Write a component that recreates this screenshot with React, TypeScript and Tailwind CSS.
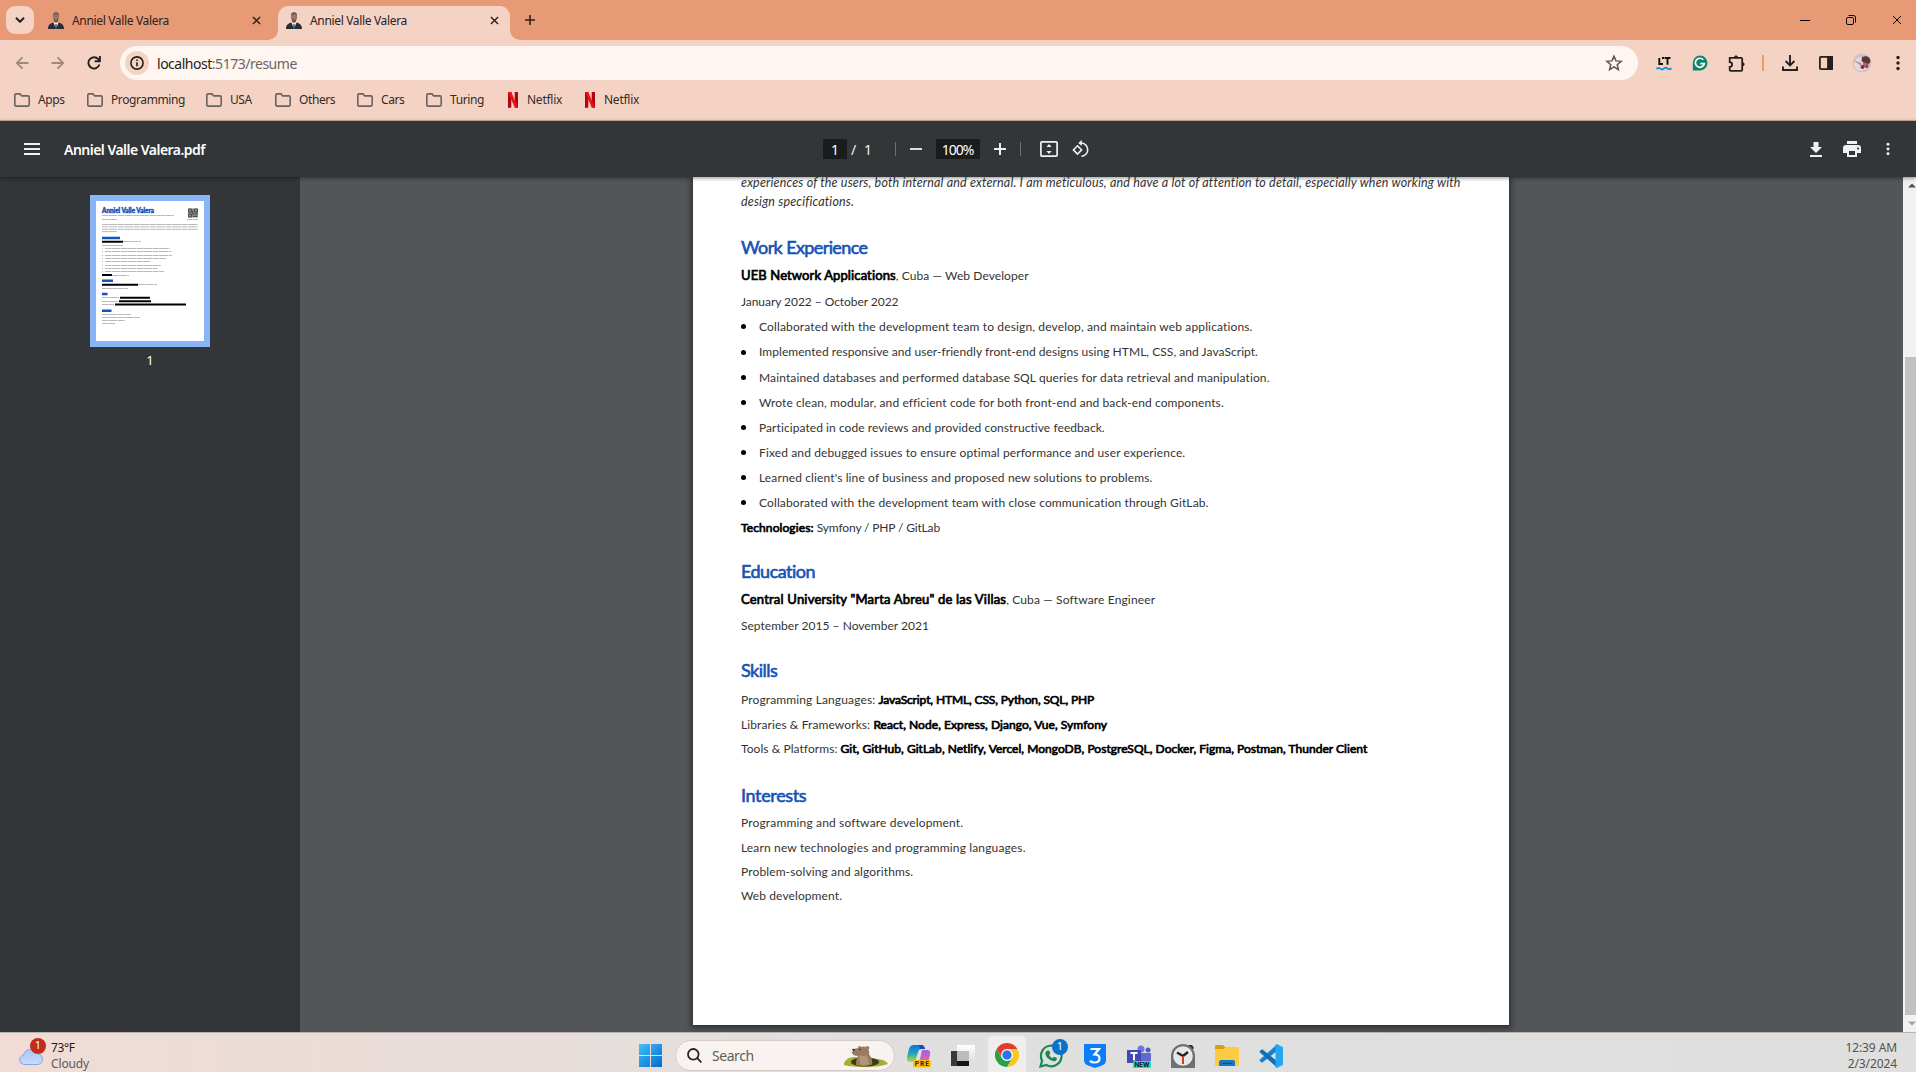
import React from "react";

type P = { className?: string; children?: React.ReactNode };

const Favicon = () => (
  <svg viewBox="0 0 16 17" className="h-[17px] w-4 shrink-0">
    <path d="M0 17C0 13 2 11.500 5 10.500L8 12l3-1.500c3 1 5 2.500 5 6.500z" fill="#2a2d36" />
    <path d="M5.500 10.500L8 17l2.500-6.500L8 9z" fill="#e8edf2" />
    <path d="M7.500 12h1l.5 5H7z" fill="#39465a" />
    <ellipse cx="8" cy="5" rx="3.100" ry="4.400" fill="#9c7560" />
    <path d="M5 4C5 1 6 .3 8 .3S11 1 11 4l-1-1.500H6z" fill="#6d5a4e" />
    <path d="M6 7.500h4v2.200L8 11 6 9.700z" fill="#7b5645" />
  </svg>
);

const Cross = ({ className }: P) => (
  <svg viewBox="0 0 10 10" className={className} stroke="currentColor" fill="none">
    <path d="M1 1l8 8M9 1L1 9" />
  </svg>
);

const Dots = ({ className }: P) => (
  <svg viewBox="0 0 4 16" className={className} fill="currentColor">
    <circle cx="2" cy="2.500" r="1.700" />
    <circle cx="2" cy="8" r="1.700" />
    <circle cx="2" cy="13.500" r="1.700" />
  </svg>
);

const Folder = () => (
  <svg viewBox="0 0 16 14" className="h-[14px] w-4 shrink-0" fill="none" stroke="#6a6261" strokeWidth="1.600">
    <path d="M.8 2.200Q.8.9 2.100.9H6l1.700 2h6.200q1.300 0 1.300 1.300v7.600q0 1.300-1.300 1.300H2.100Q.8 13.100.8 11.800z" />
  </svg>
);

const Netflix = () => (
  <svg viewBox="0 0 10 16" className="ml-[3px] h-4 w-[10px] shrink-0">
    <path d="M0 0h3.300v15.500L0 16zM6.700 0H10v16l-3.300-.5z" fill="#b1060f" />
    <path d="M0 0h3.300L10 16l-3.300-.5z" fill="#f0101c" />
  </svg>
);

const bookmarks = [
  { label: "Apps", w: "w-[73px]" },
  { label: "Programming", w: "w-[119px]" },
  { label: "USA", w: "w-[69px]" },
  { label: "Others", w: "w-[82px]" },
  { label: "Cars", w: "w-[69px]" },
  { label: "Turing", w: "w-[79px]" },
  { label: "Netflix", w: "w-[77px]" },
  { label: "Netflix", w: "w-[77px]" },
];

function TabStrip() {
  return (
    <div className="flex h-10 items-start bg-[#e79a75] text-[12px] text-[#2b211e]">
      <div className="ml-1.5 mt-1.5 flex h-7 w-7 items-center justify-center rounded-[9px] bg-[#f5d3c4]">
        <svg viewBox="0 0 10 6" className="h-[6px] w-[10px]" fill="none" stroke="#222" strokeWidth="2">
          <path d="M1 .8l4 4 4-4" />
        </svg>
      </div>
      <div className="flex h-10 w-[244px] items-center pl-[14px] pr-[17px]">
        <Favicon />
        <span className="ml-2 flex-1 pt-0.5 tracking-[-0.34px]">Anniel Valle Valera</span>
        <Cross className="h-[9px] w-[9px] stroke-[1.600]" />
      </div>
      <div className="relative mt-1.5 flex h-[34px] w-[232px] items-center rounded-t-[10px] bg-[#f5d3c4] pb-1.5 pl-2 pr-[11px]">
        <svg viewBox="0 0 10 10" className="absolute -left-[10px] bottom-0 h-[10px] w-[10px]" fill="#f5d3c4">
          <path d="M10 0v10H0A10 10 0 0 0 10 0z" />
        </svg>
        <svg viewBox="0 0 10 10" className="absolute -right-[10px] bottom-0 h-[10px] w-[10px]" fill="#f5d3c4">
          <path d="M0 0v10h10A10 10 0 0 1 0 0z" />
        </svg>
        <Favicon />
        <span className="ml-2 flex-1 pt-0.5 tracking-[-0.34px]">Anniel Valle Valera</span>
        <Cross className="h-[9px] w-[9px] stroke-[1.600]" />
      </div>
      <svg viewBox="0 0 10 10" className="ml-[15px] mt-[15px] h-[10px] w-[10px]" stroke="#2b211e" strokeWidth="1.600">
        <path d="M5 0v10M0 5h10" />
      </svg>
      <div className="ml-auto mr-[14px] flex h-10 items-center gap-9 text-black">
        <svg viewBox="0 0 10 10" className="h-[10px] w-[10px]" stroke="currentColor"><path d="M0 5.500h10" /></svg>
        <svg viewBox="0 0 10 10" className="h-[10px] w-[10px]" fill="none" stroke="currentColor">
          <rect x=".5" y="2.500" width="7" height="7" rx="1.300" />
          <path d="M2.500.5h5q2 0 2 2v5" />
        </svg>
        <Cross className="h-[10px] w-[10px]" />
      </div>
    </div>
  );
}

function AddressRow() {
  return (
    <div className="flex h-[46px] items-center text-[#25211f]">
      <svg viewBox="0 0 14 14" className="ml-[15px] h-[14px] w-[14px]" fill="none" stroke="#a18a80" strokeWidth="1.800">
        <path d="M13.500 7H2M7.500 1.300L1.800 7l5.700 5.700" />
      </svg>
      <svg viewBox="0 0 14 14" className="ml-[22px] h-[14px] w-[14px]" fill="none" stroke="#a18a80" strokeWidth="1.800">
        <path d="M.5 7H12M6.500 1.300L12.200 7l-5.700 5.700" />
      </svg>
      <svg viewBox="0 0 14 14" className="ml-[22px] h-[14px] w-[14px]" fill="none" stroke="currentColor" strokeWidth="1.900">
        <path d="M12.400 8.500A5.600 5.600 0 1 1 11.300 3.200L12.500 4.600" />
        <path d="M12.900 0v5.200H7.700" />
      </svg>
      <div className="ml-[19px] flex h-[34px] w-[1518px] items-center rounded-full bg-[#fff6f2] pl-[5px] pr-[15px]">
        <div className="flex h-6 w-6 items-center justify-center rounded-full bg-[#f5d3c4]">
          <svg viewBox="0 0 14 14" className="h-[14px] w-[14px]" fill="none" stroke="currentColor" strokeWidth="1.600">
            <circle cx="7" cy="7" r="6.100" />
            <path d="M7 6.200v4M7 3.500v1.500" />
          </svg>
        </div>
        <span className="ml-2 flex-1 text-[14px] tracking-[-0.48px] text-[#6b6563]">
          <span className="text-[#1f1c1b]">localhost</span>:5173/resume
        </span>
        <svg viewBox="0 0 24 24" className="h-[18px] w-[18px]" fill="none" stroke="#5c5654" strokeWidth="2">
          <path d="M12 3l2.700 6.200 6.800.6-5.200 4.400 1.600 6.600L12 17.300l-5.900 3.500 1.600-6.600L2.500 9.800l6.800-.6z" />
        </svg>
      </div>
      <svg viewBox="0 0 16 16" className="ml-[18px] h-4 w-4" fill="none">
        <path d="M3.300 3v6H7M6 3h2.500M9 3h5.500M11.500 3v6.800" stroke="#111" strokeWidth="1.900" />
        <path d="M.5 14q2-2 3.800-.4t3.700 0 3.700 0 3.800-.4" stroke="#1596d3" strokeWidth="1.900" />
      </svg>
      <svg viewBox="0 0 16 16" className="ml-5 h-4 w-4">
        <path d="M8 .6A7.400 7.400 0 1 1 8 15.500H.8V8A7.300 7.300 0 0 1 8 .6z" fill="#0b8468" />
        <path d="M11.300 4.800A4.500 4.500 0 1 0 12.300 8.700H8.300" fill="none" stroke="#fff" strokeWidth="1.700" />
      </svg>
      <svg viewBox="0 0 17 17" className="ml-5 h-[17px] w-[17px]" fill="none" stroke="currentColor" strokeWidth="1.800">
        <path d="M1.700 2.800h11.500q1 0 1 1v11q0 1-1 1H2.700q-1 0-1-1v-2.900a2.200 2.200 0 0 0 0-4.800z" />
        <path d="M6.200 2.500a1.800 1.800 0 0 1 3.600 0zM14.500 7.500a1.800 1.800 0 0 1 0 3.600z" fill="currentColor" strokeWidth=".6" />
      </svg>
      <div className="ml-[17px] h-4 w-0.5 bg-[#e79a75]" />
      <svg viewBox="0 0 16 16" className="ml-[18px] h-4 w-4" fill="none" stroke="currentColor" strokeWidth="1.900">
        <path d="M8 0v10M3.600 6L8 10.400 12.400 6M1 11.500V15h14v-3.500" />
      </svg>
      <svg viewBox="0 0 14 14" className="ml-[21px] h-[14px] w-[14px]" fill="none" stroke="currentColor" strokeWidth="1.800">
        <rect x=".9" y=".9" width="12.200" height="12.200" rx=".8" />
        <path d="M9 1h4v12H9z" fill="currentColor" />
      </svg>
      <svg viewBox="0 0 20 20" className="ml-[19px] h-5 w-5">
        <circle cx="10" cy="10" r="9.500" fill="#cfc2c8" />
        <circle cx="9" cy="11" r="7" fill="#e4dadd" />
        <path d="M10 4l4-1q4 1 4.500 5-1 4-5 3l-4-3z" fill="#64342f" />
        <path d="M1 7l8 3 1 3-2-1z" fill="#b28f8f" />
        <path d="M11 9l6 2-2 4-4-1z" fill="#a56a6a" />
        <circle cx="10.500" cy="14" r="2" fill="#8e2a31" />
        <circle cx="15" cy="13.500" r="1.200" fill="#8e2a31" />
      </svg>
      <Dots className="ml-6 h-4 w-1" />
    </div>
  );
}

function BookmarksBar() {
  return (
    <div className="flex h-[35px] items-center border-b border-[#cfb1a4] pb-[6px] pl-[14px] text-[12px] text-[#332b28]">
      {bookmarks.map((b, i) => (
        <div key={i} className={`flex items-center ${b.w}`}>
          {b.label === "Netflix" ? <Netflix /> : <Folder />}
          <span className={b.label === "Netflix" ? "ml-[9px] tracking-[-0.25px]" : "ml-2 tracking-[-0.4px]"}>{b.label}</span>
        </div>
      ))}
    </div>
  );
}

function PdfToolbar() {
  return (
    <div className="relative z-10 flex h-14 shrink-0 items-center bg-[#323639] text-[14px] text-[#f1f1f1] shadow-[0_1px_4px_rgba(0,0,0,0.45)]">
      <svg viewBox="0 0 16 12" className="ml-6 h-3 w-4" fill="currentColor">
        <path d="M0 0h16v2H0zM0 5h16v2H0zM0 10h16v2H0z" />
      </svg>
      <div className="ml-6 w-[759px] pt-px text-[14px] font-semibold tracking-[-0.52px] text-white">Anniel Valle Valera.pdf</div>
      <div className="flex h-5 w-6 items-center justify-center bg-[#191b1c] text-white">1</div>
      <div className="ml-1 w-[10px]">/</div>
      <div className="ml-[3px] w-[31px]">1</div>
      <div className="h-[14px] w-px bg-[#6f7274]" />
      <div className="ml-[14px] h-[2px] w-3 bg-[#dcdcdc]" />
      <div className="ml-[14px] flex h-5 w-11 items-center justify-center bg-[#191b1c] pr-px tracking-[-1px] text-white">100%</div>
      <svg viewBox="0 0 12 12" className="ml-[14px] h-3 w-3" stroke="#eee" strokeWidth="2"><path d="M6 0v12M0 6h12" /></svg>
      <div className="ml-[14px] h-[14px] w-px bg-[#6f7274]" />
      <svg viewBox="0 0 18 16" className="ml-[19px] h-4 w-[18px]" fill="none" stroke="currentColor" strokeWidth="1.700">
        <rect x=".9" y=".9" width="16.200" height="14.200" rx="1" />
        <path d="M9 3l2.600 3H6.400zM9 13l2.600-3H6.400z" fill="currentColor" stroke="none" />
      </svg>
      <svg viewBox="0 0 18 18" className="ml-[14px] h-[18px] w-[18px]" fill="none" stroke="currentColor" strokeWidth="1.600">
        <path d="M5.500 5.800L9.600 9.900 5.500 14 1.400 9.900z" />
        <path d="M8.500 3A6.700 6.700 0 1 1 9.500 16.400" />
        <path d="M9.800 0v6L6.300 3z" fill="currentColor" stroke="none" />
      </svg>
      <svg viewBox="0 0 12 15" className="ml-auto h-[15px] w-3" fill="currentColor">
        <path d="M3.500 0h5v5H12L6 11 0 5h3.500zM0 13h12v2H0z" />
      </svg>
      <svg viewBox="0 0 18 16" className="ml-[21px] h-4 w-[18px]" fill="currentColor">
        <path d="M4 0h10v3H4z" />
        <path fillRule="evenodd" d="M3 4h12a3 3 0 0 1 3 3v5h-4v4H4v-4H0V7a3 3 0 0 1 3-3zm3 6v4h6v-4zm9-3.500a1 1 0 1 0 .1 0z" />
      </svg>
      <Dots className="ml-[25px] mr-[26px] h-[14px] w-1" />
    </div>
  );
}

function Thumbnail() {
  return (
    <div className="h-[152px] w-[120px] border-[6px] border-[#8ab4f8] bg-white">
      <svg viewBox="0 0 108 140" className="h-[140px] w-[108px]">
        <text x="6" y="11.500" textLength="52" lengthAdjust="spacingAndGlyphs" fill="#1155bb" stroke="#1155bb" strokeWidth=".5" fontSize="7" fontWeight="700" fontFamily="Lato, sans-serif">Anniel Valle Valera</text>
        <path d="M92 7.500h10v9H92z" fill="#888" />
        <path d="M92.500 8h3v3h-3zM98.500 8h3v3h-3zM92.500 13h3v3h-3zM96.500 10v3h5M97 15.500h4" fill="none" stroke="#4a4a4a" strokeWidth=".9" />
        <g stroke="#9b9b9b" strokeWidth=".7" strokeDasharray="6 .4 9 .5">
          <path d="M6 14.500h72M6 18.500h15M91 18.500h11M6 23.500h96M6 25.800h96M6 28.300h96M6 30.600h15" />
          <path d="M27 40.500h18M6 44.500h21M9 47.500h65M9 50.500h66M9 54.500h67M9 57.500h61M9 60.500h45M9 64.500h56M9 67.500h52M9 70.500h59M16 74.500h17" />
          <path d="M42 83.500h19M6 87.500h26M6 96.500h17M6 100.500h16M6 103.500h12" />
          <path d="M6 113.500h29M6 116.500h38M6 119.500h23M6 122.500h13" />
          <path d="M6 47.500h1M6 50.500h1M6 54.500h1M6 57.500h1M6 60.500h1M6 64.500h1M6 67.500h1M6 70.500h1" />
        </g>
        <path d="M6 37h18M6 79.700h11M6 93h5.500M6 109.700h9.500" stroke="#1155bb" strokeWidth="2.400" />
        <path d="M6 40.700h21M6 74h10M6 83.700h36M24 96.700h30M23 100.300h32M19 103.500h71" stroke="#000" strokeWidth="2.100" />
      </svg>
    </div>
  );
}

const bullets: { t: string; c: string }[] = [
  { t: "Collaborated with the development team to design, develop, and maintain web applications.", c: "h-[25px] tracking-[0.14px]" },
  { t: "Implemented responsive and user-friendly front-end designs using HTML, CSS, and JavaScript.", c: "h-[26px] tracking-[0.05px]" },
  { t: "Maintained databases and performed database SQL queries for data retrieval and manipulation.", c: "h-[25px] tracking-[0.125px]" },
  { t: "Wrote clean, modular, and efficient code for both front-end and back-end components.", c: "h-[25px] tracking-[0.1px]" },
  { t: "Participated in code reviews and provided constructive feedback.", c: "h-[25px] tracking-[0.07px]" },
  { t: "Fixed and debugged issues to ensure optimal performance and user experience.", c: "h-[25px] tracking-[0.125px]" },
  { t: "Learned client's line of business and proposed new solutions to problems.", c: "h-[25px] tracking-[0.125px]" },
  { t: "Collaborated with the development team with close communication through GitLab.", c: "h-[25px] tracking-[0.115px]" },
];

const H = ({ className = "", children }: P) => (
  <h2 className={`flex h-[26px] items-center pb-0.5 text-[18px] font-normal text-[#1552b5] [-webkit-text-stroke:0.6px_#1552b5] ${className}`}>{children}</h2>
);
const Row = ({ className = "", children }: P) => (
  <div className={`flex items-center whitespace-pre ${className}`}>{children}</div>
);
const Strong = ({ className = "", children }: P) => (
  <b className={`font-normal text-black [-webkit-text-stroke:0.7px_#000] ${className}`}>{children}</b>
);

function Resume() {
  return (
    <div className="ml-[393px] h-[848px] w-[816px] overflow-hidden bg-white px-12 font-[Lato,sans-serif] text-[12px] text-[#333] shadow-[0_1px_6px_2px_rgba(0,0,0,0.45)]">
      <div className="-mt-1 mb-6 whitespace-pre text-[12.5px] leading-[19px] italic tracking-[0.17px]">
        <p>experiences of the users, both internal and external. I am meticulous, and have a lot of attention to detail, especially when working with</p>
        <p>design specifications.</p>
      </div>
      <H className="tracking-[-0.6px]">Work Experience</H>
      <Row className="mt-0.5 h-[26px] tracking-[0.08px]"><Strong className="text-[13px] tracking-[0.12px]">UEB Network Applications</Strong>, Cuba — Web Developer</Row>
      <Row className="h-[25px] tracking-[-0.05px]">January 2022 – October 2022</Row>
      {bullets.map((b) => (
        <Row key={b.t} className={b.c}>
          <span className="mr-[13px] h-[5px] w-[5px] rounded-full bg-black" />
          {b.t}
        </Row>
      ))}
      <Row className="h-[25px] tracking-[-0.15px]"><Strong className="tracking-[0.11px]">Technologies: </Strong>Symfony / PHP / GitLab</Row>
      <H className="mt-[19px] tracking-[-0.5px]">Education</H>
      <Row className="mt-0.5 h-[26px] tracking-[0.13px]"><Strong className="text-[13px] tracking-[0.2px]">Central University "Marta Abreu" de las Villas</Strong>, Cuba — Software Engineer</Row>
      <Row className="h-[26px] tracking-[0.03px]">September 2015 – November 2021</Row>
      <H className="mt-[19px] tracking-[-0.5px]">Skills</H>
      <Row className="mt-[3px] h-[25px] tracking-[0.13px]">Programming Languages: <Strong className="tracking-[-0.12px]">JavaScript, HTML, CSS, Python, SQL, PHP</Strong></Row>
      <Row className="h-[25px] tracking-[0.1px]">Libraries &amp; Frameworks: <Strong className="tracking-[0.06px]">React, Node, Express, Django, Vue, Symfony</Strong></Row>
      <Row className="h-6 tracking-[0.06px]">Tools &amp; Platforms: <Strong className="tracking-[0.035px]">Git, GitHub, GitLab, Netlify, Vercel, MongoDB, PostgreSQL, Docker, Figma, Postman, Thunder Client</Strong></Row>
      <H className="mt-[22px] tracking-[-0.35px]">Interests</H>
      <Row className="mt-0.5 h-6 tracking-[0.16px]">Programming and software development.</Row>
      <Row className="h-[25px] tracking-[0.15px]">Learn new technologies and programming languages.</Row>
      <Row className="h-6 tracking-[0.12px]">Problem-solving and algorithms.</Row>
      <Row className="h-6 tracking-[0.1px]">Web development.</Row>
    </div>
  );
}

function Taskbar() {
  return (
    <div className="flex h-10 shrink-0 items-center border-t border-[#b9b3b0] bg-linear-to-r from-[#f1dcd5] via-[#dfdfdf] to-[#dfe0de] pt-1.5 text-[12px]">
      <div className="flex w-[639px] items-center pl-[19px]">
        <div className="relative h-7 w-6">
          <svg viewBox="0 0 24 16" className="mt-[7px] h-4 w-6">
            <defs><linearGradient id="cl" x2="0" y2="1"><stop stopColor="#a9c6f5" /><stop offset="1" stopColor="#c9dcfa" /></linearGradient></defs>
            <path d="M5 15.500a4.700 4.700 0 0 1-.5-9.300A7.500 7.500 0 0 1 18.800 5 5.300 5.300 0 0 1 19 15.500z" fill="url(#cl)" stroke="#6f9ae8" strokeWidth=".8" />
          </svg>
          <span className="absolute -top-1 left-[11px] flex h-4 w-4 items-center justify-center rounded-full bg-[#c42b1c] text-[11px] text-white">1</span>
        </div>
        <div className="ml-2 leading-4">
          <div className="tracking-[-0.35px] text-[#1d1b1a]">73°F</div>
          <div className="tracking-[-0.15px] text-[#5e5856]">Cloudy</div>
        </div>
      </div>
      <svg viewBox="0 0 23 23" className="h-[23px] w-[23px]">
        <defs><linearGradient id="wn" x2="1" y2="1"><stop stopColor="#42c2f8" /><stop offset="1" stopColor="#0368cf" /></linearGradient></defs>
        <path d="M0 0h11v11H0zM12 0h11v11H12zM0 12h11v11H0zM12 12h11v11H12z" fill="url(#wn)" />
      </svg>
      <div className="ml-[13px] flex h-[31px] w-[220px] items-center rounded-full border border-[#d5cbc6] bg-[#f8f3f1] pl-[11px] pr-[6px]">
        <svg viewBox="0 0 15 15" className="h-[15px] w-[15px]" fill="none" stroke="#262626" strokeWidth="1.800">
          <circle cx="6.300" cy="6.300" r="5.300" /><path d="M10.200 10.200l4.200 4.200" />
        </svg>
        <span className="ml-[10px] flex-1 text-[14px] tracking-[-0.45px] text-[#625d5a]">Search</span>
        <svg viewBox="0 0 44 22" className="h-[22px] w-11">
          <path d="M0 18q3-6 10-6l24 2q8 1 10 5-8 3-22 3T0 20z" fill="#a4ae36" />
          <ellipse cx="21" cy="17" rx="14" ry="4.500" fill="#3b3a1c" />
          <path d="M12 20q0-6 2-9-5 0-6-3-1-3 2-4l4-1q0-2 2-2l1 1q3-1 5 0 1-2 3 0 1 1-.5 2.500 1 2.500.5 5 4 4 3 10-8 3-16 .500z" fill="#9b7a5e" />
          <path d="M15 10q5 2 8 0l2 9q-5 2-9 0z" fill="#b3947a" />
          <circle cx="9.500" cy="5" r="1.300" fill="#3a2824" /><circle cx="16" cy="4.500" r=".8" fill="#2b1f1a" />
          <path d="M5 4l4 2M5 8l4-2" stroke="#e4dedd" />
        </svg>
      </div>
      <svg viewBox="0 0 24 24" className="ml-3 h-6 w-6">
        <defs>
          <linearGradient id="c1" x2="0" y2="1"><stop stopColor="#1a6fe0" /><stop offset=".5" stopColor="#20a6b8" /><stop offset="1" stopColor="#c5d834" /></linearGradient>
          <linearGradient id="c2" x2="0" y2="1"><stop stopColor="#a05bf0" /><stop offset="1" stopColor="#f26d8c" /></linearGradient>
        </defs>
        <path d="M7 1h8q2 0 3 4h-4q-2 0-3 3l-2 7q-1 3-3 3H3q-4 0-3-5l2-8q1-4 5-4z" fill="url(#c1)" />
        <path d="M14 1q3 0 4 4h-5q0-4-3-4z" fill="#1a49b8" />
        <path d="M15 6h5q4 0 3 5l-1 4q-1 4-5 4h-7q2-1 3-4l2-9z" fill="url(#c2)" />
        <rect x="6" y="16" width="18" height="7.500" rx="2" fill="#fdc010" />
        <text x="7.800" y="22.200" fontSize="6.500" fontWeight="700" textLength="14.500" fontFamily="Inter, sans-serif" fill="#222">PRE</text>
      </svg>
      <svg viewBox="0 0 24 24" className="ml-5 h-6 w-6">
        <defs><linearGradient id="tv" x2="0" y2="1"><stop stopColor="#fff" /><stop offset="1" stopColor="#e2e2e2" /></linearGradient></defs>
        <path d="M0 7h16v15H0z" fill="#3a3a3a" /><path d="M6 1h18v15H6z" fill="url(#tv)" />
        <path d="M6 7h12v10H6z" fill="#bcbcbc" /><path d="M6 17h12v5H6z" fill="#151515" />
      </svg>
      <div className="-mt-px ml-[13px] flex h-[39px] w-[38px] items-center justify-center rounded-t bg-[#f0eeed]">
        <svg viewBox="0 0 24 24" className="h-6 w-6">
          <circle cx="12" cy="12" r="12" fill="#fff" />
          <path d="M12 6h10.400A12 12 0 0 0 1.600 6l5.200 9z" fill="#e33b2e" />
          <path d="M17.200 15L12 24A12 12 0 0 0 22.400 6H12z" fill="#fcc61f" />
          <path d="M6.800 15L1.600 6A12 12 0 0 0 12 24l5.200-9z" fill="#28a04a" />
          <circle cx="12" cy="12" r="6" fill="#fff" /><circle cx="12" cy="12" r="4.700" fill="#2f72ec" />
        </svg>
      </div>
      <div className="relative ml-[13px] h-6 w-6">
        <svg viewBox="0 0 24 24" className="h-6 w-6">
          <path d="M1.500 22.500l1.600-5.800A10.300 10.300 0 1 1 7.300 21z" fill="none" stroke="#1b8755" strokeWidth="2.200" />
          <path d="M8.500 6.500l1.800.2 1 2.600-1.200 1.800q1.200 2.300 3.500 3.200l1.600-1.500 2.600 1.200q.3 3.300-3.300 3.300-7.200-1.800-8.200-7.500-.1-2.300 2.200-3.300z" fill="#1b8755" />
        </svg>
        <span className="absolute -top-[5px] left-[13px] flex h-4 w-4 items-center justify-center rounded-full bg-[#0a72ca] text-[11px] text-white">1</span>
      </div>
      <svg viewBox="0 0 22 24" className="ml-[21px] h-6 w-[22px]">
        <path d="M0 0h22v16q0 4-4 5.500L11 24l-7-2.500Q0 20 0 16z" fill="#0a7dfb" />
        <path d="M6.500 5h8.500l-4.500 5.500q5 0 5 4T10.500 18.500q-3 0-4.500-1.800" fill="none" stroke="#fff" strokeWidth="2.200" />
      </svg>
      <svg viewBox="0 0 24 24" className="ml-[21px] h-6 w-6">
        <circle cx="14" cy="5" r="3.500" fill="#6f75dc" /><circle cx="21" cy="6" r="2.500" fill="#525ac4" />
        <path d="M10 9h14v8H10z" fill="#6168cf" /><path d="M0 6h14v13H0z" fill="#4149b4" />
        <path d="M3.500 9h7M7 9v7.500" stroke="#fff" strokeWidth="1.900" />
        <rect x="6" y="17" width="18" height="7" rx="1.500" fill="#21dccb" />
        <text x="7.500" y="22.800" fontSize="6" fontWeight="700" textLength="15" lengthAdjust="spacingAndGlyphs" fontFamily="Inter, sans-serif" fill="#111">NEW</text>
      </svg>
      <svg viewBox="0 0 24 24" className="ml-5 h-6 w-6">
        <path d="M0 12h24v12H0z" fill="#6d7176" /><path d="M17 1h4l2 3-2 2z" fill="#303236" />
        <circle cx="12" cy="12" r="12" fill="#6d7176" /><circle cx="12" cy="12" r="9.800" fill="#e5e7e8" />
        <path d="M12 12L6 8.500M12 12l5-4" stroke="#222" strokeWidth="2.400" /><path d="M12 12v8" stroke="#d9391f" strokeWidth="2" />
      </svg>
      <svg viewBox="0 0 24 22" className="ml-5 h-[22px] w-6">
        <path d="M0 1q0-1 1-1h7l3 3h-1v3H0z" fill="#dd9b10" /><path d="M0 4h9l2-2h12q1 0 1 1v17q0 1-1 1H1q-1 0-1-1z" fill="#fccb44" />
        <path d="M4 21v-4q0-2 2-2h12q2 0 2 2v4z" fill="#1276c8" /><path d="M7.500 18.500h9" stroke="#0b4a86" />
      </svg>
      <svg viewBox="0 0 24 24" className="ml-5 h-6 w-6">
        <path d="M18 .5L1 15.500l-.5 1 2 2h1L18 7z" fill="#1283cc" /><path d="M18 23.500L1 8.500l-.5-1 2-2h1L18 17z" fill="#0d70b8" />
        <path d="M17.500 0L24 3v18l-6.500 3q-1 0-1-1V1q0-1 1-1z" fill="#25a7f0" />
      </svg>
      <div className="ml-auto mr-[19px] pt-px text-right leading-4 tracking-[-0.1px] text-[#55524f]">
        <div>12:39 AM</div>
        <div>2/3/2024</div>
      </div>
    </div>
  );
}

export default function App() {
  return (
    <div className="flex h-[1072px] w-[1916px] flex-col overflow-hidden bg-[#525659] font-['Noto_Sans',sans-serif]">
      <TabStrip />
      <div className="h-[81px] shrink-0 bg-[#f5d3c4]">
        <AddressRow />
        <BookmarksBar />
      </div>
      <PdfToolbar />
      <div className="flex h-[855px] shrink-0 overflow-hidden">
        <aside className="flex w-[300px] shrink-0 flex-col items-center bg-[#323639] pt-[18px]">
          <Thumbnail />
          <div className="mt-1 text-[13px] leading-[18px] text-white">1</div>
        </aside>
        <main className="w-[1603px] shrink-0 bg-[#525659]">
          <Resume />
        </main>
        <div className="flex w-[13px] flex-col items-center bg-[#f1f1f1]">
          <svg viewBox="0 0 10 5" className="ml-1 mt-1.5 h-[5px] w-2" fill="#505050"><path d="M5 0l5 5H0z" /></svg>
          <div className="ml-0.5 mt-[169px] h-[658px] w-[11px] bg-[#c1c1c1]" />
          <svg viewBox="0 0 10 5" className="ml-1 mt-1.5 h-[5px] w-2" fill="#a3a3a3"><path d="M0 0h10L5 5z" /></svg>
        </div>
      </div>
      <Taskbar />
    </div>
  );
}
